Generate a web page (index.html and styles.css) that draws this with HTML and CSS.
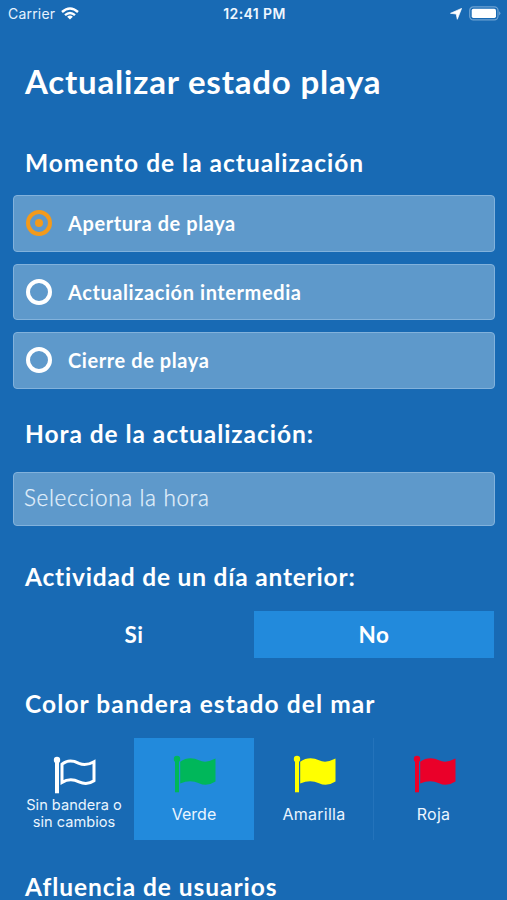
FILE: index.html
```
<!DOCTYPE html>
<html lang="es">
<head>
<meta charset="utf-8">
<meta name="viewport" content="width=device-width, initial-scale=1">
<title>Actualizar estado playa</title>
<link rel="stylesheet" href="styles.css">
</head>
<body>
<svg class="symbols" aria-hidden="true">
  <symbol id="flag" viewBox="0 0 44 38">
    <circle cx="4" cy="4" r="3.2" fill="currentColor"/>
    <path d="M4 4v33.3" stroke="currentColor" stroke-width="4"/>
    <path d="M7.2 6.8C13 2.4 20 2.3 26 5.3Q33 8.7 42.5 3.6V26.5Q34 32 26 28.2Q17 24 7.2 28.6Z" fill="currentColor"/>
  </symbol>
  <symbol id="flag-outline" viewBox="0 0 44 38">
    <circle cx="4" cy="4" r="3.2" fill="currentColor"/>
    <path d="M4 4v33.3" stroke="currentColor" stroke-width="4"/>
    <path d="M9 8.2C14 4 20 4.3 26 7.3Q33 10.2 41 5.7V24.7Q34 29.5 26 25.8Q17 21.5 9 26.4Z" fill="none" stroke="currentColor" stroke-width="3"/>
  </symbol>
</svg>
<header class="status">
  <div class="carrier">
    <span>Carrier</span>
    <svg class="wifi" viewBox="0 0 18 13" fill="none" stroke="currentColor" stroke-width="2.4"><path d="M1 5Q9-2 17 5"/><path d="M4 8.1Q9 3.7 14 8.1"/><path d="M9 12.6L6.1 9.7Q9 7.4 11.9 9.7Z" fill="currentColor" stroke="none"/></svg>
  </div>
  <time class="clock">12:41 PM</time>
  <div class="indicators">
    <svg class="location" viewBox="0 0 12 12"><path d="M11.6.4L7.3 11.3 6.2 6 .5 5.3Z" fill="currentColor" stroke="currentColor" stroke-width=".7" stroke-linejoin="round"/></svg>
    <svg class="battery" viewBox="0 0 32 15"><rect x=".7" y=".9" width="28.3" height="13" rx="3.6" fill="none" stroke="#6da2d2" stroke-width="1.2"/><rect x="2.7" y="2.8" width="24.3" height="9.2" rx="1.7" fill="currentColor"/><path d="M30.3 5.2q2 2.1 0 4.3z" fill="#8bb5dc"/></svg>
  </div>
</header>
<main>
  <h1>Actualizar estado playa</h1>
  <section class="moment">
    <h2 class="h-moment">Momento de la actualización</h2>
    <div class="options" role="radiogroup">
      <div class="option" role="radio" aria-checked="true"><i class="radio selected"></i><span>Apertura de playa</span></div>
      <div class="option" role="radio" aria-checked="false"><i class="radio"></i><span>Actualización intermedia</span></div>
      <div class="option" role="radio" aria-checked="false"><i class="radio"></i><span>Cierre de playa</span></div>
    </div>
  </section>
  <section class="hour">
    <h2 class="h-hour">Hora de la actualización:</h2>
    <div class="field">Selecciona la hora</div>
  </section>
  <section class="activity">
    <h2 class="h-activity">Actividad de un día anterior:</h2>
    <div class="segments"><div class="segment">Si</div><div class="segment active">No</div></div>
  </section>
  <section class="sea">
    <h2 class="h-sea">Color bandera estado del mar</h2>
    <div class="flags">
      <div class="flag none"><svg><use href="#flag-outline"/></svg><span>Sin bandera o<br>sin cambios</span></div>
      <div class="flag green active"><svg><use href="#flag"/></svg><span>Verde</span></div>
      <div class="flag yellow"><svg><use href="#flag"/></svg><span>Amarilla</span></div>
      <div class="flag red"><svg><use href="#flag"/></svg><span>Roja</span></div>
    </div>
  </section>
  <section class="crowd"><h2 class="h-crowd">Afluencia de usuarios</h2></section>
</main>
</body>
</html>
```
FILE: styles.css
```
* { box-sizing: border-box; }
body {
  margin: 0;
  height: 900px;
  overflow: hidden;
  background: #186ab4;
  color: #fff;
  font-family: Lato, sans-serif;
}
.symbols { display: none; }
.status {
  display: grid;
  grid-template-columns: 1fr auto 1fr;
  align-items: center;
  height: 27px;
  padding: 0 6px 0 8px;
  font: 14px/27px Inter, sans-serif;
}
.carrier { display: flex; align-items: center; gap: 6px; color: #e6f2ff; letter-spacing: .2px; }
.wifi { width: 18px; height: 13px; color: #fff; }
.clock { font-weight: 600; letter-spacing: .4px; color: #eef7ff; }
.indicators { display: flex; justify-content: flex-end; align-items: center; gap: 7px; }
.location { width: 12px; height: 12px; }
.battery { width: 32px; height: 15px; }
h1, h2 { margin: 0 0 0 25px; font-weight: 700; white-space: nowrap; }
h1 { padding-top: 34px; font-size: 33px; line-height: 40px; letter-spacing: .8px; }
h2 { font-size: 24.5px; line-height: 30px; letter-spacing: .95px; }
.h-moment { letter-spacing: 1px; }
.h-activity { letter-spacing: .8px; }
.h-sea { letter-spacing: 1.1px; }
.moment { padding-top: 47px; }
.options { display: grid; gap: 12px; margin: 17px 12px 0 13px; }
.option {
  display: flex;
  align-items: center;
  gap: 16px;
  height: 56.5px;
  padding-left: 12px;
  border: 1px solid #82b2dc;
  border-radius: 4px;
  background: #5e99cb;
  font-size: 20px;
  font-weight: 700;
  letter-spacing: .58px;
}
.radio { display: grid; place-items: center; width: 26px; height: 26px; border: 4px solid #fff; border-radius: 50%; }
.selected { border-color: #f39a1b; }
.selected::after { content: ""; width: 8px; height: 8px; border-radius: 50%; background: #f39a1b; }
.hour { padding-top: 30px; }
.field {
  height: 54px;
  margin: 23px 12px 0 13px;
  padding-left: 10px;
  border: 1px solid #82b2dc;
  border-radius: 4px;
  background: #5e99cb;
  color: #e4f1fc;
  font-size: 22.5px;
  font-weight: 300;
  line-height: 49px;
  letter-spacing: .65px;
  -webkit-text-stroke: .25px #e4f1fc;
}
.activity { padding-top: 36px; }
.segments { display: grid; grid-template-columns: 1fr 1fr; height: 46px; margin: 19px 13px 0 14px; }
.segment { font-size: 22.5px; font-weight: 700; line-height: 47px; text-align: center; letter-spacing: .5px; }
.active { background: #228adc; }
.sea { padding-top: 32px; }
.flags { display: grid; grid-template-columns: repeat(4, 1fr); height: 102px; margin: 19px 13px 0 14px; }
.flag { display: flex; flex-direction: column; align-items: center; padding-top: 17px; font: 16px/20px Inter, sans-serif; }
.flag svg { width: 44px; height: 38px; margin-left: 2px; }
.flag span { margin-top: 11px; color: #eaf5ff; text-align: center; }
.none { padding-top: 18px; font-size: 14.6px; line-height: 17px; }
.none span { margin-top: 3px; white-space: nowrap; }
.green svg { color: #00b75a; }
.yellow svg { color: #ff0; }
.yellow span { letter-spacing: .25px; }
.red { box-shadow: -1px 0 #2473bb; }
.red svg { color: #ea0029; }
.red span { margin-right: 1px; letter-spacing: .2px; }
.crowd { padding-top: 32px; }
```
